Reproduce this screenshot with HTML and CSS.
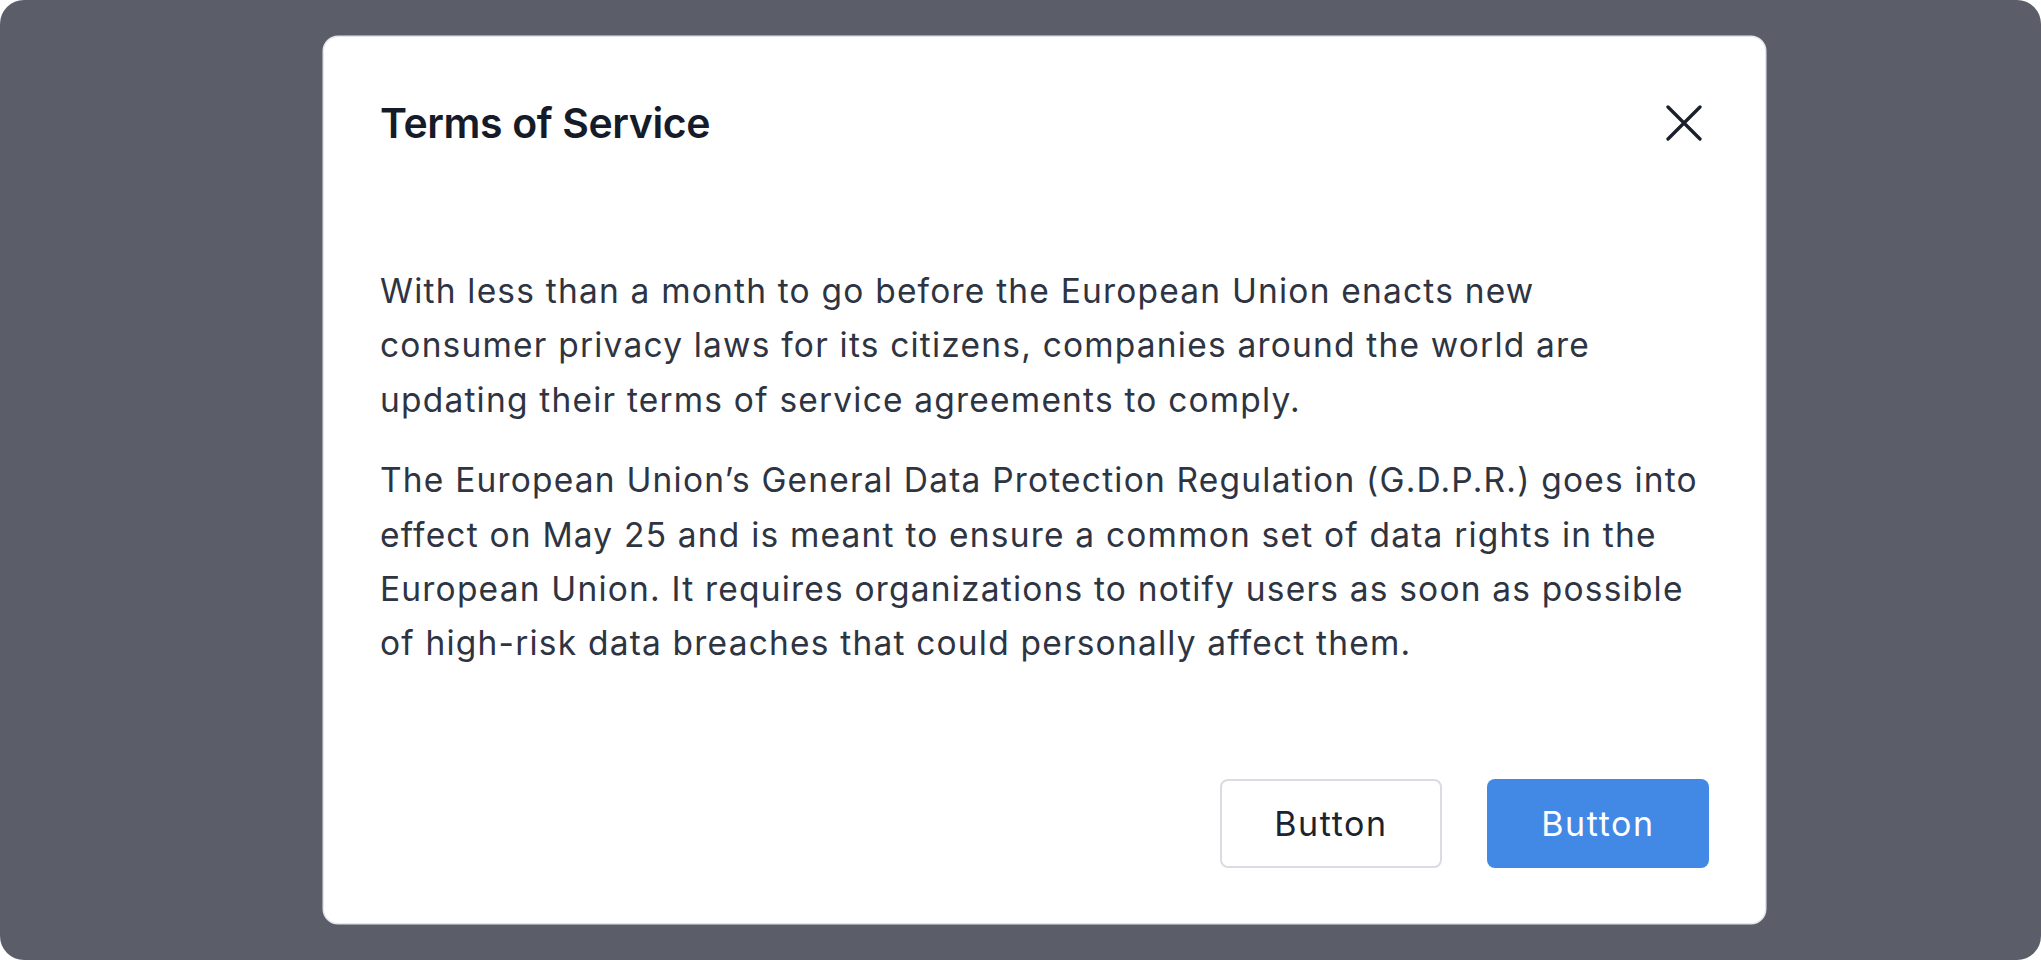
FILE: index.html
```html
<!DOCTYPE html>
<html lang="en">
<head>
<meta charset="utf-8">
<title>Terms of Service</title>
<link rel="stylesheet" href="styles.css">
</head>
<body>
<div class="backdrop">
  <div class="modal">
    <div class="modal-header">
      <h2 class="modal-title">Terms of Service</h2>
      <button class="close-btn" aria-label="Close">
        <svg width="36" height="36" viewBox="0 0 36 36" fill="none" stroke="#1a1f2c" stroke-width="3.3" stroke-linecap="round"><path d="M2 2L34 34M34 2L2 34"/></svg>
      </button>
    </div>
    <div class="modal-body">
      <p>With less than a month to go before the European Union enacts new<br>consumer privacy laws for its citizens, companies around the world are<br>updating their terms of service agreements to comply.</p>
      <p>The European Union’s General Data Protection Regulation (G.D.P.R.) goes into<br>effect on May 25 and is meant to ensure a common set of data rights in the<br>European Union. It requires organizations to notify users as soon as possible<br>of high-risk data breaches that could personally affect them.</p>
    </div>
    <div class="modal-footer">
      <button class="btn btn-secondary">Button</button>
      <button class="btn btn-primary">Button</button>
    </div>
  </div>
</div>
</body>
</html>
```

FILE: styles.css
```css
html, body {
  margin: 0;
  padding: 0;
  background: #ffffff;
}
body {
  font-family: Inter, "Noto Sans", sans-serif;
}
.backdrop {
  width: 2041px;
  height: 960px;
  background: #5b5e69;
  border-radius: 24px;
  box-sizing: border-box;
  padding: 37px 0 0 324px;
}
.modal {
  width: 1441px;
  height: 886px;
  box-sizing: border-box;
  background: #ffffff;
  border-radius: 14px;
  box-shadow: 0 0 0 1.5px #e3e5ea;
  padding: 56px 56px 55px 56px;
  display: flex;
  flex-direction: column;
}
.modal-header {
  height: 60px;
  display: flex;
  align-items: center;
  justify-content: space-between;
}
.modal-title {
  margin: 0;
  font-size: 41px;
  font-weight: 600;
  color: #161b29;
  letter-spacing: -0.4px;
}
.close-btn {
  background: none;
  border: 0;
  padding: 0;
  margin-right: 7px;
  width: 36px;
  height: 36px;
  display: flex;
}
.modal-body {
  margin-top: 111px;
  color: #2e3442;
  font-size: 33.5px;
  line-height: 54.4px;
  letter-spacing: 1.2px;
  white-space: nowrap;
}
.modal-body p {
  margin: 0 0 26px 0;
}
.modal-body p:last-child {
  margin-bottom: 0;
}
.modal-footer {
  margin-top: auto;
  display: flex;
  justify-content: flex-end;
  gap: 45px;
}
.btn {
  width: 222px;
  height: 89px;
  border-radius: 8px;
  font-family: Inter, "Noto Sans", sans-serif;
  font-size: 34px;
  letter-spacing: 1.6px;
  font-weight: 400;
  cursor: pointer;
}
.btn-secondary {
  background: #ffffff;
  border: 2px solid #d9dce1;
  color: #1c2230;
}
.btn-primary {
  background: #4189e5;
  border: 0;
  color: #ffffff;
}
```
